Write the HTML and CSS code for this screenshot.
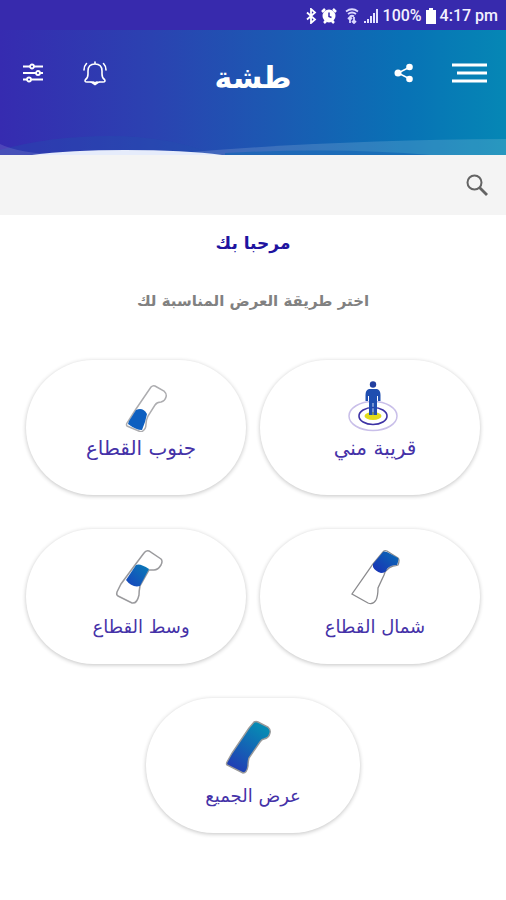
FILE: index.html
```html
<!DOCTYPE html>
<html lang="ar" dir="rtl">
<head>
<meta charset="utf-8">
<meta name="viewport" content="width=device-width, initial-scale=1">
<title>طشة</title>
<link rel="stylesheet" href="styles.css">
</head>
<body>
<div class="status" dir="ltr">
  <svg width="12" height="16" viewBox="0 0 12 16" fill="none" stroke="#fff" stroke-width="1.800"><path d="M2 4.500l8 7-4 3.500V1l4 3.500-8 7"/></svg>
  <svg class="alarm" width="16" height="16" viewBox="0 0 16 16"><circle cx="8" cy="8" r="6.500" fill="#fff"/><path d="M1 4l3-3M15 4l-3-3M3 15l2-2M13 15l-2-2" stroke="#fff" stroke-width="2.500"/><path d="M8 4.500V8.500l2.500 1" fill="none" stroke="#372aad" stroke-width="1.500"/></svg>
  <svg class="wifi" width="14" height="16" viewBox="0 0 14 16" fill="none" stroke="#dcd9ff" stroke-width="1.800"><path d="M1 3.500Q7-1 13 3.500M3 6q4-3 8 0M5 8.500q2-1.500 4 0"/><path d="M5 15V9M3 11l2-2 2 2M9 9v6M7 13l2 2 2-2"/></svg>
  <svg width="16" height="16" viewBox="0 0 16 16" fill="#e5e2ff"><path d="M1 13h2v2H1zM4 11h2v4H4zM7 8h2v7H7zM10 5h2v10h-2zM13 1h2v14h-2z"/></svg>
  <span class="percent">100%</span>
  <svg width="10" height="16" viewBox="0 0 10 16" fill="#fff"><path d="M3 0h4v2h3v14H0V2h3z"/></svg>
  <span>4:17 pm</span>
</div>

<header class="header">
  <div class="bar">
    <div class="tools">
      <button class="tool" type="button" aria-label="القائمة">
        <svg width="36" height="20" viewBox="0 0 36 20" stroke="#fff" stroke-width="3"><path d="M0 2h35M5 10h30M0 18h35"/></svg>
      </button>
      <button class="tool" type="button" aria-label="مشاركة">
        <svg width="20" height="20" viewBox="0 0 20 20" fill="#fff"><path d="M16 4L4 10l12 6" fill="none" stroke="#fff" stroke-width="1.500"/><circle cx="15.500" cy="4" r="3.300"/><circle cx="4" cy="10" r="3.500"/><circle cx="15.500" cy="16" r="3.300"/></svg>
      </button>
    </div>
    <h1 class="title">طشة</h1>
    <div class="tools tools-end">
      <button class="tool" type="button" aria-label="الإشعارات">
        <svg width="26" height="26" viewBox="0 0 26 26" fill="none" stroke="#fff" stroke-width="1.600" stroke-linecap="round"><path d="M9 22H5q-3 0-1.500-2.500Q6 18 6 14v-3q0-7 7-7t7 7v3q0 4 2.500 5.500Q24 22 21 22h-4M13 4V2M11 22q2 3 4 0M8.500 22h1M4.500 3.500Q2 6 2 10M21.500 3.500Q24 6 24 10"/><path d="M10 22.500h6l-3 2z" fill="#fff"/></svg>
      </button>
      <button class="tool" type="button" aria-label="التصفية">
        <svg width="22" height="20" viewBox="0 0 22 20" fill="#3338b2" stroke="#fff" stroke-width="1.800"><path d="M1 3.500h20M1 10h20M1 16.500h20"/><circle cx="10" cy="3.500" r="2"/><circle cx="16" cy="10" r="2"/><circle cx="7" cy="16.500" r="2"/></svg>
      </button>
    </div>
  </div>
  <svg class="waves" viewBox="0 0 506 22" preserveAspectRatio="none" aria-hidden="true">
    <path d="M0 17Q50 3 110 3Q170 3 215 22H0z" fill="#2350ae" opacity=".35"/>
    <path d="M0 11Q18 20 60 22H0z" fill="#fff" opacity=".12"/>
    <path d="M180 20Q330 7 506 6V22H180z" fill="#fff" opacity=".14"/>
    <path d="M225 20Q340 14 430 22H225z" fill="#0d62b4" opacity=".6"/>
    <path d="M32 22Q70 17 125 17Q185 17 222 22z" fill="#e6ecfb"/>
  </svg>
</header>

<form class="search" role="search">
  <label class="search-label" for="q" aria-label="بحث">
    <svg width="24" height="24" viewBox="0 0 24 24" fill="none" stroke="#646464" stroke-width="2"><circle cx="9.500" cy="9.500" r="7"/><path d="M14.500 14.500l7.500 7.500" stroke-width="2.800"/></svg>
  </label>
  <input class="search-input" id="q" type="search">
</form>

<main class="main">
  <h2 class="welcome">مرحبا بك</h2>
  <p class="hint">اختر طريقة العرض المناسبة لك</p>
  <div class="cards">
    <button class="card card-large" type="button">
      <svg width="80" height="52" viewBox="0 0 80 52">
        <ellipse cx="43" cy="36" rx="24" ry="14.500" fill="none" stroke="#c9bfe9" stroke-width="1.500"/>
        <ellipse cx="43" cy="36" rx="14" ry="8.500" fill="none" stroke="#3d32a5" stroke-width="1.600"/>
        <ellipse cx="43" cy="36" rx="8.500" ry="4" fill="#e2dc1c"/>
        <circle cx="43" cy="4.500" r="3.200" fill="#233f9f"/>
        <path d="M39 9h8q3.500 1 3.500 6v6h-2.500v-5h-1v19h-3.600V23h-.8v12H39V16h-1v5h-2.500v-6q0-5 3.500-6z" fill="#1f4eb0"/>
      </svg>
      <span class="card-label">قريبة مني</span>
    </button>
    <button class="card card-large" type="button">
      <svg width="80" height="52" viewBox="0 0 80 52">
        <path d="M40 29L55 7q2-2 4-1l9 5q3 3 2 6-1 4-5 5-4 0-6 3l-7 11q-2 4-2 8 0 6-5 8L31 46q-1-1 0-3z" fill="#fff" stroke="#adadb0" stroke-width="1.500"/>
        <path d="M40 30q7-3 11 4l-2 8-3 8q-6 0-14-6l1-3z" fill="#0d5fc0"/>
      </svg>
      <span class="card-label">جنوب القطاع</span>
    </button>
    <button class="card" type="button">
      <svg width="80" height="62" viewBox="0 0 80 62">
        <defs><linearGradient id="north" x1="0" y1="1" x2="1" y2="0"><stop offset="0" stop-color="#1a2fb5"/><stop offset="1" stop-color="#096db5"/></linearGradient></defs>
        <path d="M43 15L53 3q1-2 4-1l11 7q2 2 0 7-2 1-5 1-4 1-6 4-2 1-3 5l-6 13q0 8-2 12-3 5-8 3L22 45z" fill="#fff" stroke="#8b8b8e" stroke-width="1.300"/>
        <path d="M43 15L53 3q1-1 4 0l11 6q1 2-1 7-7 0-10 4-1 4-6 4-6-2-8-6z" fill="url(#north)"/>
      </svg>
      <span class="card-label">شمال القطاع</span>
    </button>
    <button class="card" type="button">
      <svg width="80" height="62" viewBox="0 0 80 62">
        <defs><linearGradient id="middle" x1="0" y1="1" x2="1" y2="0"><stop offset="0" stop-color="#1743bd"/><stop offset="1" stop-color="#087cb6"/></linearGradient></defs>
        <path d="M39 16L48 4q2-3 5-2l12 8q2 2 0 6-3 5-7 5h-5l-9 16q-1 5-1 9-2 9-7 8L22 47q-2-1-1-4l4-8z" fill="#fff" stroke="#9b9b9e" stroke-width="1.500"/>
        <path d="M40 16q4-2 13 4l-9 17q-8 2-14-6z" fill="url(#middle)"/>
      </svg>
      <span class="card-label">وسط القطاع</span>
    </button>
    <button class="card card-wide" type="button">
      <svg width="80" height="62" viewBox="0 0 80 62">
        <defs><linearGradient id="all" x1="0" y1="1" x2=".6" y2="0"><stop offset="0" stop-color="#2532b5"/><stop offset="1" stop-color="#078ab4"/></linearGradient></defs>
        <path d="M36 10l5-6q2-1 4 0l10 5q3 3 2 6-1 5-6 6-2 0-4 3L36 40q-1 4-1 8-1 7-5 7L14 47q-1-1 0-3l5-9z" fill="url(#all)" stroke="#9a9a9a" stroke-width="1.400"/>
      </svg>
      <span class="card-label">عرض الجميع</span>
    </button>
  </div>
</main>
</body>
</html>
```
FILE: styles.css
```css
* {
  box-sizing: border-box;
}

body {
  margin: 0;
  background: #fff;
  font-family: "DejaVu Sans", sans-serif;
}

button {
  font: inherit;
  border: 0;
  padding: 0;
  background: none;
  cursor: pointer;
}

svg {
  display: block;
  flex: none;
}

.status {
  display: flex;
  align-items: center;
  justify-content: flex-end;
  gap: 4px;
  height: 30px;
  padding: 2px 8px 0;
  background: #372aad;
  color: #f3f1ff;
  font: 500 16px/24px Roboto, sans-serif;
}

.wifi {
  margin-left: 4px;
}

.header {
  position: relative;
  height: 125px;
  padding: 20px 18px 0;
  background: linear-gradient(90deg, #362bb0 0%, #2b42b1 30%, #1b5ab2 55%, #0872b5 80%, #0587b5 100%);
}

.bar {
  position: relative;
  z-index: 1;
  display: grid;
  grid-template-columns: 1fr auto 1fr;
  align-items: start;
}

.tools {
  display: flex;
  gap: 38px;
  height: 46px;
  align-items: center;
}

.tools-end {
  justify-content: flex-end;
  padding-left: 4px;
}

.title {
  margin: 4px 0 0;
  color: #fff;
  font-size: 30px;
  line-height: 48px;
  font-weight: 700;
}

.waves {
  position: absolute;
  left: 0;
  bottom: 0;
  width: 100%;
  height: 22px;
}

.search {
  display: flex;
  align-items: center;
  height: 60px;
  padding: 0 17px;
  background: #f4f4f4;
}

.search-input {
  flex: 1;
  min-width: 0;
  height: 40px;
  padding: 0 12px;
  border: 0;
  outline: 0;
  background: transparent;
  font: inherit;
  font-size: 16px;
}

.main {
  padding: 12px 26px 64px;
  text-align: center;
}

.welcome {
  margin: 0;
  color: #20139f;
  font-size: 17px;
  line-height: 32px;
}

.hint {
  margin: 26px 0 0;
  color: #818181;
  font-size: 15px;
  line-height: 32px;
  font-weight: 700;
}

.cards {
  display: grid;
  grid-template-columns: 1fr 1fr;
  gap: 34px 14px;
  margin-top: 43px;
}

.card {
  display: flex;
  flex-direction: column;
  align-items: center;
  height: 135px;
  padding-top: 20px;
  border-radius: 68px;
  background: #fff;
  box-shadow: 0 1px 4px rgba(0, 0, 0, .24);
  color: #4532a8;
  font-size: 18px;
  line-height: 32px;
}

.card-label {
  padding-left: 10px;
}

.card-large {
  font-size: 20px;
}

.card-wide {
  grid-column: 1 / -1;
  justify-self: center;
  width: 47%;
}

.card-wide .card-label {
  padding-left: 0;
}
```
